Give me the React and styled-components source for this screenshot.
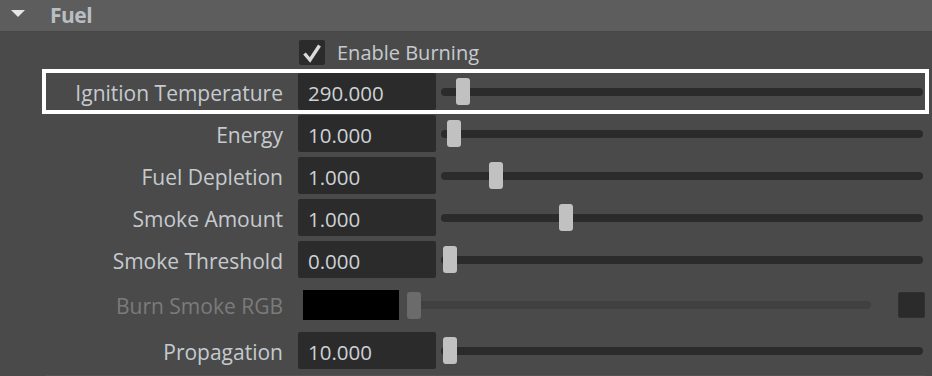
import React from "react";
import styled, { createGlobalStyle } from "styled-components";

const GlobalStyle = createGlobalStyle`
  html, body {
    margin: 0;
    padding: 0;
    background: #4a4a4a;
  }
  body {
    font-family: "Open Sans", "Noto Sans", sans-serif;
  }
`;

const Panel = styled.div`
  width: 932px;
  height: 376px;
  background: #4a4a4a;
  overflow: hidden;
`;

const Header = styled.div`
  height: 32px;
  background: #5d5d5d;
  display: flex;
  align-items: center;
  border-bottom: 1px solid #474747;
  box-sizing: border-box;
`;

const Arrow = styled.span`
  width: 0;
  height: 0;
  margin: 0 0 4px 11px;
  border-left: 7px solid transparent;
  border-right: 7px solid transparent;
  border-top: 7px solid #e6e6e6;
`;

const Title = styled.h2`
  margin: 0 0 2px 25px;
  font-size: 21px;
  font-weight: 700;
  color: #b9bec3;
  letter-spacing: -0.5px;
`;

const Body = styled.div`
  padding: 6px 7px 0 46px;
  display: flex;
  flex-direction: column;
  gap: 5px;
`;

const CheckRow = styled.label`
  display: flex;
  align-items: center;
  gap: 12px;
  height: 29px;
  margin-bottom: 1px;
  padding-left: 253px;
  font-size: 20px;
  color: #c6cacf;
`;

const CheckBox = styled.span`
  width: 26px;
  height: 25px;
  border-radius: 2px;
  background: #2b2b2b;
  display: flex;
  align-items: center;
  justify-content: center;
`;

const Row = styled.div`
  display: flex;
  align-items: center;
  height: ${(p) => (p.$tall ? 44 : 37)}px;
  outline: ${(p) => (p.$selected ? "4px solid #ffffff" : "none")};
  outline-offset: 0;
`;

const Label = styled.div`
  width: 237px;
  padding-top: 2px;
  text-align: right;
  font-size: 21px;
  color: ${(p) => (p.$disabled ? "#7b7b7b" : "#c6cacf")};
  white-space: nowrap;
`;

const Field = styled.div`
  width: 138px;
  height: 37px;
  margin-left: 15px;
  box-sizing: border-box;
  padding: 2px 0 0 10px;
  border-radius: 2px;
  background: #2b2b2b;
  display: flex;
  align-items: center;
  font-size: 20.5px;
  color: #cdd2d7;
`;

const Swatch = styled.div`
  width: 96px;
  height: 30px;
  margin-left: 20px;
  background: #000;
`;

const Slider = styled.div`
  position: relative;
  flex: 1;
  height: 27px;
  margin: 0 ${(p) => (p.$short ? 27 : 2)}px 0 ${(p) => (p.$short ? 8 : 5)}px;
  display: flex;
  align-items: center;
`;

const Track = styled.div`
  width: 100%;
  height: 8px;
  border-radius: 4px;
  background: ${(p) => (p.$disabled ? "#404040" : "#2b2b2b")};
`;

const Handle = styled.div`
  position: absolute;
  top: 0;
  width: 14px;
  height: 27px;
  border-radius: 3px;
  background: ${(p) => (p.$disabled ? "#6b6b6b" : "#c1c1c1")};
`;

const ColorBox = styled.div`
  width: 27px;
  height: 26px;
  border-radius: 2px;
  background: #2b2b2b;
  border: 1px solid #303030;
  box-sizing: border-box;
`;

const Footer = styled.div`
  margin-top: 1px;
  height: 2px;
  background: #535353;
`;

const rows = [
  { label: "Ignition Temperature", value: "290.000", pos: 0.032, selected: true },
  { label: "Energy", value: "10.000", pos: 0.013 },
  { label: "Fuel Depletion", value: "1.000", pos: 0.103 },
  { label: "Smoke Amount", value: "1.000", pos: 0.252 },
  { label: "Smoke Threshold", value: "0.000", pos: 0.004 },
];

const SliderBar = ({ pos, disabled, short }) => (
  <Slider $short={short}>
    <Track $disabled={disabled} />
    <Handle $disabled={disabled} style={{ left: `calc((100% - 14px) * ${pos})` }} />
  </Slider>
);

const Check = () => (
  <svg width="20" height="20" viewBox="0 0 20 20">
    <path d="M2.5 10.5 L8 17 L17.5 2.5" fill="none" stroke="#dadada" strokeWidth="3.4" strokeLinejoin="miter" />
  </svg>
);

const App = () => {
  return (
    <Panel>
      <GlobalStyle />
      <Header>
        <Arrow />
        <Title>Fuel</Title>
      </Header>
      <Body>
        <CheckRow>
          <CheckBox>
            <Check />
          </CheckBox>
          Enable Burning
        </CheckRow>
        {rows.map((r) => (
          <Row key={r.label} $selected={r.selected}>
            <Label>{r.label}</Label>
            <Field>{r.value}</Field>
            <SliderBar pos={r.pos} />
          </Row>
        ))}
        <Row $tall>
          <Label $disabled>Burn Smoke RGB</Label>
          <Swatch />
          <SliderBar pos={0} disabled short />
          <ColorBox />
        </Row>
        <Row>
          <Label>Propagation</Label>
          <Field>10.000</Field>
          <SliderBar pos={0.004} />
        </Row>
        <Footer />
      </Body>
    </Panel>
  );
};

export default App;
